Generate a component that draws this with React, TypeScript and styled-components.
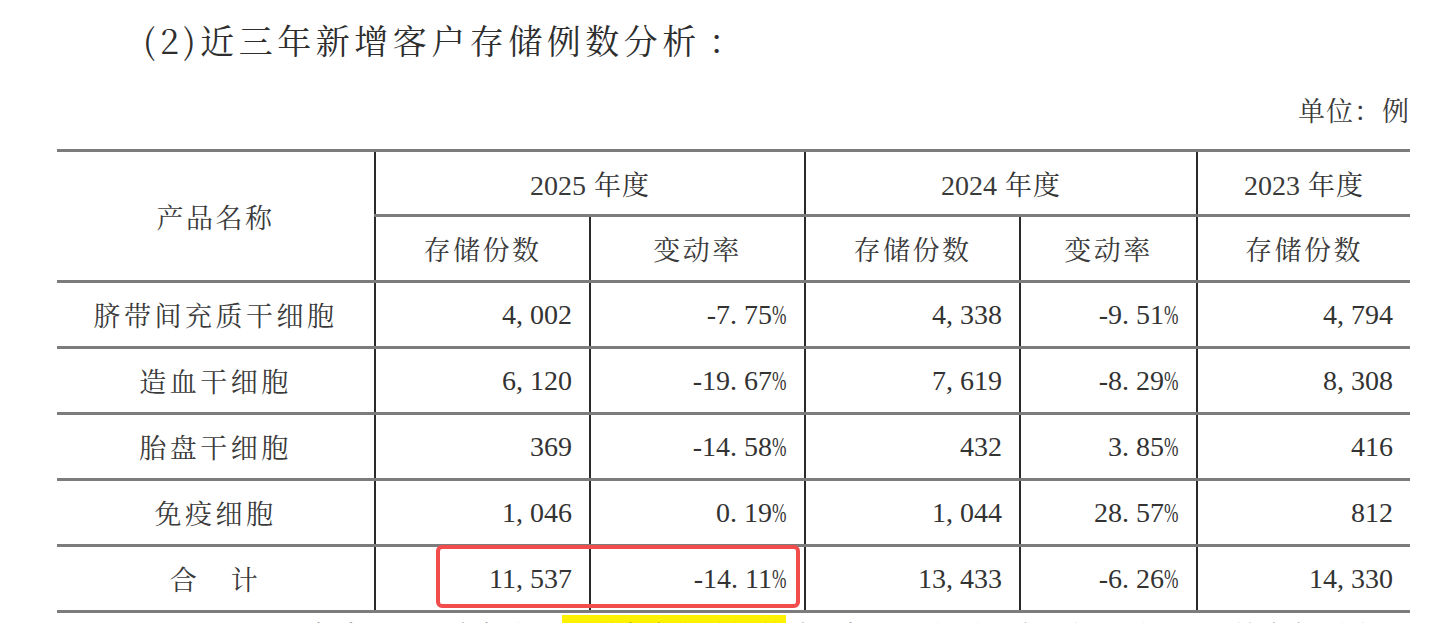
import React from "react";
import styled, { createGlobalStyle } from "styled-components";

const Global = createGlobalStyle`
  html, body { margin: 0; padding: 0; background: #ffffff; }
  body { overflow: hidden; }
`;

const cjk = `"Noto Serif CJK SC", "Noto Sans CJK SC", sans-serif`;
const num = `"Liberation Serif", "Noto Sans CJK SC", serif`;

const Page = styled.div`
  width: 1439px;
  height: 623px;
  box-sizing: border-box;
  padding: 0 29px 0 57px;
  overflow: hidden;
  color: #333;
`;

const Title = styled.h2`
  margin: 0;
  padding-top: 18px;
  margin-left: 86px;
  font-family: ${cjk};
  font-weight: 400;
  font-size: 34px;
  line-height: 44px;
  letter-spacing: 4.5px;
  color: #2e2e2e;
`;

const Colon = styled.span`
  display: inline-block;
  padding-left: 8px;
`;

const Unit = styled.div`
  margin-top: 31px;
  text-align: right;
  font-family: ${cjk};
  font-size: 27px;
  line-height: 34px;
  letter-spacing: 1px;
  color: #3a3a3a;
`;

const TableWrap = styled.div`
  position: relative;
  margin-top: 22px;
`;

const Table = styled.table`
  width: 1353px;
  border-collapse: collapse;
  table-layout: fixed;
`;

const Cell = styled.td<{ $align?: "left" | "right" | "center"; $h?: number; $noLeft?: boolean; $noRight?: boolean }>`
  height: ${(p) => p.$h ?? 63}px;
  padding: 0 ${(p) => (p.$align === "right" ? "17px" : "0")} 0 0;
  text-align: ${(p) => p.$align ?? "center"};
  vertical-align: middle;
  border-top: 3px solid #7c7c7c;
  border-bottom: 3px solid #7c7c7c;
  border-left: ${(p) => (p.$noLeft ? "none" : "2px solid #2a2a2a")};
  border-right: ${(p) => (p.$noRight ? "none" : "2px solid #2a2a2a")};
  box-sizing: border-box;
`;

const Label = styled.span<{ $spacing?: number }>`
  font-family: ${cjk};
  font-size: 27px;
  letter-spacing: ${(p) => p.$spacing ?? 2.5}px;
  color: #3a3a3a;
`;

const Year = styled.span`
  font-family: ${num};
  font-size: 28px;
  color: #3a3a3a;
`;

const YearCjk = styled.span`
  font-family: ${cjk};
  font-size: 27px;
  letter-spacing: 1px;
  margin-left: 8px;
`;

const NumText = styled.span`
  font-family: ${num};
  font-size: 28px;
  color: #333;
  white-space: nowrap;
`;

const Sep = styled.span`
  display: inline-block;
  width: 14px;
  text-align: left;
`;

const Pct = styled.span`
  display: inline-block;
  width: 15px;
  transform: scaleX(0.62);
  transform-origin: left center;
`;

const Highlight = styled.div`
  position: absolute;
  left: 379px;
  top: 396px;
  width: 364px;
  height: 63px;
  border: 4px solid #f24c4c;
  border-radius: 6px;
  box-sizing: border-box;
  pointer-events: none;
`;

const Para = styled.p`
  margin: 5px 0 0 183px;
  font-family: ${cjk};
  font-size: 28px;
  line-height: 34px;
  white-space: nowrap;
  color: #222;
`;

const Mark = styled.span`
  background: #fff200;
`;

const Num: React.FC<{ v: string }> = ({ v }) => (
  <NumText>
    {v.split("").map((c, i) =>
      c === "," || c === "." ? (
        <Sep key={i}>{c}</Sep>
      ) : c === "%" ? (
        <Pct key={i}>%</Pct>
      ) : (
        <React.Fragment key={i}>{c}</React.Fragment>
      )
    )}
  </NumText>
);

const rows: [string, string, string, string, string, string][] = [
  ["脐带间充质干细胞", "4,002", "-7.75%", "4,338", "-9.51%", "4,794"],
  ["造血干细胞", "6,120", "-19.67%", "7,619", "-8.29%", "8,308"],
  ["胎盘干细胞", "369", "-14.58%", "432", "3.85%", "416"],
  ["免疫细胞", "1,046", "0.19%", "1,044", "28.57%", "812"],
  ["合　计", "11,537", "-14.11%", "13,433", "-6.26%", "14,330"],
];

const YearHead: React.FC<{ y: string; span?: number; last?: boolean }> = ({ y, span, last }) => (
  <Cell colSpan={span} $h={65} $noRight={last}>
    <Year>{y}</Year>
    <YearCjk>年度</YearCjk>
  </Cell>
);

export default function App() {
  return (
    <>
      <Global />
      <Page>
        <Title>
          (2)近三年新增客户存储例数分析<Colon>：</Colon>
        </Title>
        <Unit>单位：例</Unit>
        <TableWrap>
          <Table>
            <colgroup>
              <col style={{ width: 318 }} />
              <col style={{ width: 215 }} />
              <col style={{ width: 215 }} />
              <col style={{ width: 215 }} />
              <col style={{ width: 177 }} />
              <col style={{ width: 213 }} />
            </colgroup>
            <thead>
              <tr>
                <Cell rowSpan={2} $noLeft $h={65}>
                  <Label>产品名称</Label>
                </Cell>
                <YearHead y="2025" span={2} />
                <YearHead y="2024" span={2} />
                <YearHead y="2023" last />
              </tr>
              <tr>
                <Cell $h={66}><Label>存储份数</Label></Cell>
                <Cell $h={66}><Label>变动率</Label></Cell>
                <Cell $h={66}><Label>存储份数</Label></Cell>
                <Cell $h={66}><Label>变动率</Label></Cell>
                <Cell $h={66} $noRight><Label>存储份数</Label></Cell>
              </tr>
            </thead>
            <tbody>
              {rows.map((r) => (
                <tr key={r[0]}>
                  <Cell $noLeft $h={66}>
                    <Label $spacing={3.5}>{r[0]}</Label>
                  </Cell>
                  {r.slice(1).map((v, i) => (
                    <Cell key={i} $align="right" $h={66} $noRight={i === 4}>
                      <Num v={v} />
                    </Cell>
                  ))}
                </tr>
              ))}
            </tbody>
          </Table>
          <Highlight />
        </TableWrap>
        <Para>
          2025 年度，公司全年实现<Mark>新增客户存储例数</Mark>较上年同期有所下降，主要系行业环境变化所致。
        </Para>
      </Page>
    </>
  );
}
